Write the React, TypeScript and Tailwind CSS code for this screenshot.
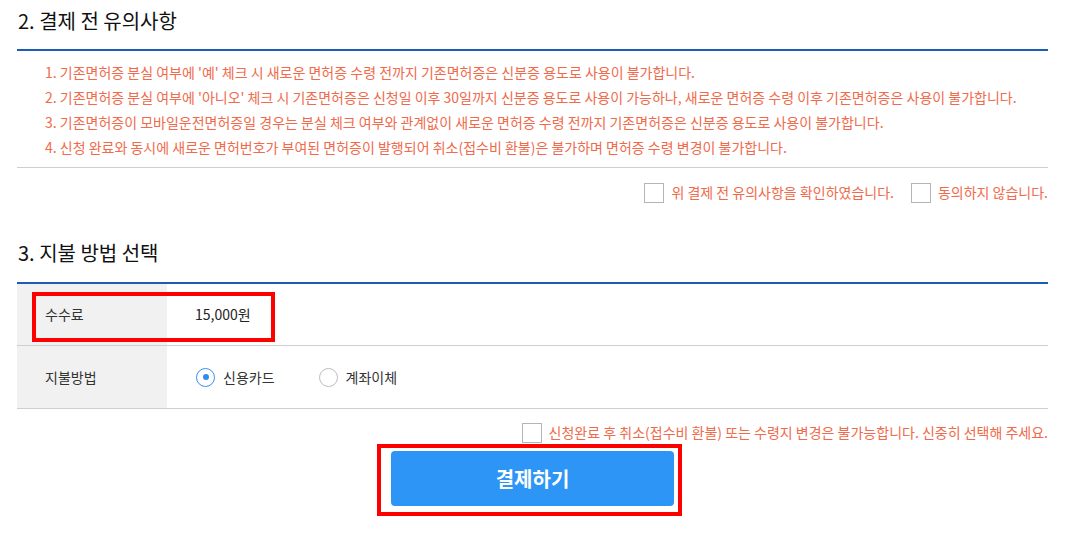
const NOTICES = [
  "1. 기존면허증 분실 여부에 '예' 체크 시 새로운 면허증 수령 전까지 기존면허증은 신분증 용도로 사용이 불가합니다.",
  "2. 기존면허증 분실 여부에 '아니오' 체크 시 기존면허증은 신청일 이후 30일까지 신분증 용도로 사용이 가능하나, 새로운 면허증 수령 이후 기존면허증은 사용이 불가합니다.",
  "3. 기존면허증이 모바일운전면허증일 경우는 분실 체크 여부와 관계없이 새로운 면허증 수령 전까지 기존면허증은 신분증 용도로 사용이 불가합니다.",
  "4. 신청 완료와 동시에 새로운 면허번호가 부여된 면허증이 발행되어 취소(접수비 환불)은 불가하며 면허증 수령 변경이 불가합니다.",
];

function CheckBox({ label }: { label: string }) {
  return (
    <label className="flex items-center gap-[7px]">
      <span className="h-[20px] w-[20px] border border-[#b5b5b5] bg-white" />
      <span className="text-[14px] text-[#f06a4b]">{label}</span>
    </label>
  );
}

function Radio({ label, checked }: { label: string; checked?: boolean }) {
  return (
    <label className="flex items-center gap-[8px]">
      <span
        className={
          checked
            ? "flex h-[19px] w-[19px] items-center justify-center rounded-full border border-[#3a8ef0] bg-white"
            : "flex h-[19px] w-[19px] items-center justify-center rounded-full border border-[#bdbdbd] bg-white"
        }
      >
        {checked && <span className="h-[6px] w-[6px] rounded-full bg-[#2f8bf0]" />}
      </span>
      <span className="text-[14px] text-[#333]">{label}</span>
    </label>
  );
}

export default function App() {
  return (
    <div
      className="w-[1068px] bg-white pl-[17px] pr-[20px] text-[#222]"
      style={{ fontFamily: '"Noto Sans CJK KR", "Noto Sans", sans-serif' }}
    >
      {/* 2. 결제 전 유의사항 */}
      <section>
        <h2 className="flex h-[49px] items-center pl-[1px] pb-[8px] text-[20px] font-normal text-[#111]">
          2. 결제 전 유의사항
        </h2>
        <div className="h-[2px] bg-[#1b5cb4]" />
        <ul className="pt-[9px] pb-[7px] pl-[28px]">
          {NOTICES.map((t) => (
            <li key={t} className="h-[25px] text-[14px] leading-[25px] text-[#f06a4b]">
              {t}
            </li>
          ))}
        </ul>
        <div className="border-t border-[#cfcfcf]" />
        <div className="flex justify-end gap-[17px] pt-[14px]">
          <CheckBox label="위 결제 전 유의사항을 확인하였습니다." />
          <CheckBox label="동의하지 않습니다." />
        </div>
      </section>

      {/* 3. 지불 방법 선택 */}
      <section className="pt-[24px]">
        <h2 className="flex h-[55px] items-center pl-[1px] pb-[3px] text-[20px] font-normal text-[#111]">
          3. 지불 방법 선택
        </h2>
        <div className="h-[2px] bg-[#1b5cb4]" />
        <div className="relative">
          <div className="flex h-[62px] border-b border-[#cfcfcf]">
            <div className="flex w-[150px] items-center bg-[#f1f1f1] pl-[28px] text-[14px] text-[#333]">
              수수료
            </div>
            <div className="flex items-center pl-[28px] text-[14px] text-[#222]">15,000원</div>
          </div>
          <div className="flex h-[63px] border-b border-[#cfcfcf]">
            <div className="flex w-[150px] items-center bg-[#f1f1f1] pl-[28px] text-[14px] text-[#333]">
              지불방법
            </div>
            <div className="flex items-center gap-[44px] pl-[29px]">
              <Radio label="신용카드" checked />
              <Radio label="계좌이체" />
            </div>
          </div>
          <div className="pointer-events-none absolute left-[15px] top-[8px] h-[50px] w-[243px] border-[4px] border-[#ff0000]" />
        </div>
        <div className="flex justify-end pt-[13px]">
          <CheckBox label="신청완료 후 취소(접수비 환불) 또는 수령지 변경은 불가능합니다. 신중히 선택해 주세요." />
        </div>
        <div className="flex justify-center pt-[8px] pb-[21px]">
          <div className="relative">
            <button className="flex h-[55px] w-[283px] items-center justify-center rounded-[4px] bg-[#2d95f6] text-[20px] font-bold text-white">
              결제하기
            </button>
            <div className="pointer-events-none absolute -left-[14px] -top-[7px] h-[72px] w-[305px] border-[4px] border-[#ff0000]" />
          </div>
        </div>
      </section>
    </div>
  );
}
